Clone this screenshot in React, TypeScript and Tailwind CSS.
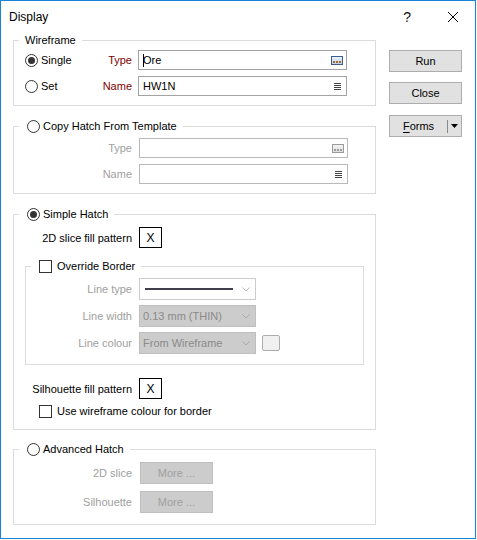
import type { ReactNode } from "react";

function Radio({ checked = false }: { checked?: boolean }) {
  return (
    <span className="w-[13px] h-[13px] rounded-full border border-[#333333] bg-white flex items-center justify-center shrink-0">
      {checked && <span className="w-[7px] h-[7px] rounded-full bg-[#333333]" />}
    </span>
  );
}

function Checkbox() {
  return <span className="w-[13px] h-[13px] border border-[#333333] bg-white shrink-0" />;
}

function Group({ legend, className = "", children }: { legend: ReactNode; className?: string; children: ReactNode }) {
  return (
    <div className={`border border-[#dcdcdc] ${className}`}>
      <div className="-mt-[8px] ml-[5px] w-fit h-[14px] bg-white px-[6px] flex items-center">{legend}</div>
      {children}
    </div>
  );
}

function EllipsisIcon({ disabled = false }: { disabled?: boolean }) {
  return (
    <svg width="12" height="9" viewBox="0 0 12 9">
      <defs>
        <linearGradient id={disabled ? "eg-d" : "eg"} x1="0" y1="0" x2="0" y2="1">
          <stop offset="0" stopColor={disabled ? "#f4f4f4" : "#eef4fc"} />
          <stop offset="1" stopColor={disabled ? "#dedede" : "#b9cce9"} />
        </linearGradient>
      </defs>
      <rect x="0.5" y="0.5" width="11" height="8" fill={`url(#${disabled ? "eg-d" : "eg"})`} stroke={disabled ? "#9c9c9c" : "#3d5c8f"} />
      <rect x="2" y="5" width="2" height="2" fill={disabled ? "#9c9c9c" : "#a86a2e"} />
      <rect x="5" y="5" width="2" height="2" fill={disabled ? "#9c9c9c" : "#a86a2e"} />
      <rect x="8" y="5" width="2" height="2" fill={disabled ? "#9c9c9c" : "#a86a2e"} />
    </svg>
  );
}

function ListIcon() {
  return (
    <svg width="7" height="7" viewBox="0 0 7 7" stroke="#444444" strokeWidth="1">
      <line x1="0" y1="0.5" x2="7" y2="0.5" />
      <line x1="0" y1="2.5" x2="7" y2="2.5" />
      <line x1="0" y1="4.5" x2="7" y2="4.5" />
      <line x1="0" y1="6.5" x2="7" y2="6.5" />
    </svg>
  );
}

function Chevron({ color }: { color: string }) {
  return (
    <svg width="8" height="5" viewBox="0 0 8 5" fill="none" stroke={color} strokeWidth="1">
      <path d="M0.5 0.5 L4 4 L7.5 0.5" />
    </svg>
  );
}

function TextField({ children, icon, disabled = false, className = "" }: { children?: ReactNode; icon: "ellipsis" | "list"; disabled?: boolean; className?: string }) {
  return (
    <div className={`h-[20px] w-[209px] border ${disabled ? "border-[#b9b9b9]" : "border-[#a3a3a3]"} bg-white flex items-center pl-[4px] ${className}`}>
      <div className="flex-1 flex items-center">{children}</div>
      {icon === "ellipsis" ? (
        <span className="mr-[3px] flex"><EllipsisIcon disabled={disabled} /></span>
      ) : (
        <span className="mr-[5px] flex"><ListIcon /></span>
      )}
    </div>
  );
}

function DisabledCombo({ text }: { text: string }) {
  return (
    <div className="ml-[7px] w-[117px] h-[22px] border border-[#bfbfbf] bg-[#cccccc] flex items-center pl-[3px] pr-[5px] text-[#8a8a8a]">
      <span className="flex-1">{text}</span>
      <Chevron color="#a9a9a9" />
    </div>
  );
}

function PatternBox() {
  return (
    <div className="ml-[7px] w-[23px] h-[21px] border border-black bg-white flex items-center justify-center text-[12px]">X</div>
  );
}

function MoreButton() {
  return (
    <div className="ml-[8px] w-[73px] h-[22px] border border-[#bfbfbf] bg-[#cccccc] flex items-center justify-center text-[#a0a0a0]">
      More ...
    </div>
  );
}

export default function App() {
  return (
    <div className="w-[476px] h-[539px] border border-[#1883d7] bg-white flex flex-col font-['Liberation_Sans',Arial,sans-serif] text-[11px] text-black leading-[14px]">
      {/* Title bar */}
      <div className="h-[31px] shrink-0 flex items-center pl-[8px]">
        <span className="text-[12px]">Display</span>
        <span className="ml-auto text-[14px] leading-none text-[#111111]">?</span>
        <svg className="ml-[37px] mr-[17px]" width="10" height="10" viewBox="0 0 10 10" stroke="#000" strokeWidth="1">
          <line x1="0" y1="0" x2="10" y2="10" />
          <line x1="10" y1="0" x2="0" y2="10" />
        </svg>
      </div>

      <div className="flex">
        {/* Left column */}
        <div className="ml-[12px] w-[363px] flex flex-col">
          <Group legend={<span>Wireframe</span>} className="mt-[8px] pb-[9px]">
            <div className="mt-[3px] h-[20px] flex items-center">
              <div className="w-[70px] pl-[11px] flex items-center">
                <Radio checked />
                <span className="ml-[3px]">Single</span>
              </div>
              <div className="w-[48px] text-right text-[#800000]">Type</div>
              <TextField icon="ellipsis" className="ml-[6px]">
                <span className="w-px h-[13px] bg-black -mr-px" />
                <span>Ore</span>
              </TextField>
            </div>
            <div className="mt-[6px] h-[20px] flex items-center">
              <div className="w-[70px] pl-[11px] flex items-center">
                <Radio />
                <span className="ml-[3px]">Set</span>
              </div>
              <div className="w-[48px] text-right text-[#800000]">Name</div>
              <TextField icon="list" className="ml-[6px]">
                <span>HW1N</span>
              </TextField>
            </div>
          </Group>

          <Group
            legend={
              <span className="flex items-center ml-[2px]">
                <Radio />
                <span className="ml-[3px]">Copy Hatch From Template</span>
              </span>
            }
            className="mt-[20px] pb-[9px]"
          >
            <div className="mt-[5px] h-[20px] flex items-center">
              <div className="w-[118px] text-right text-[#a0a0a0]">Type</div>
              <TextField icon="ellipsis" disabled className="ml-[7px]" />
            </div>
            <div className="mt-[6px] h-[20px] flex items-center">
              <div className="w-[118px] text-right text-[#a0a0a0]">Name</div>
              <TextField icon="list" disabled className="ml-[7px]" />
            </div>
          </Group>

          <Group
            legend={
              <span className="flex items-center ml-[2px]">
                <Radio checked />
                <span className="ml-[3px]">Simple Hatch</span>
              </span>
            }
            className="mt-[20px] pb-[11px]"
          >
            <div className="mt-[6px] flex items-center">
              <div className="w-[118px] text-right">2D slice fill pattern</div>
              <PatternBox />
            </div>

            <div className="mt-[18px] mx-[11px] border border-[#dcdcdc] pb-[10px]">
              <div className="-mt-[8px] ml-[5px] w-fit h-[14px] bg-white px-[6px] flex items-center">
                <span className="flex items-center ml-[2px]">
                  <Checkbox />
                  <span className="ml-[5px]">Override Border</span>
                </span>
              </div>
              <div className="mt-[5px] flex items-center">
                <div className="w-[106px] text-right text-[#a0a0a0]">Line type</div>
                <div className="ml-[7px] w-[117px] h-[22px] border border-[#cccccc] bg-white flex items-center pl-[5px] pr-[5px]">
                  <span className="w-[88px] h-[2px] bg-[#3f3f4e]" />
                  <span className="ml-auto flex"><Chevron color="#b8b8b8" /></span>
                </div>
              </div>
              <div className="mt-[5px] flex items-center">
                <div className="w-[106px] text-right text-[#a0a0a0]">Line width</div>
                <DisabledCombo text="0.13 mm (THIN)" />
              </div>
              <div className="mt-[5px] flex items-center">
                <div className="w-[106px] text-right text-[#a0a0a0]">Line colour</div>
                <DisabledCombo text="From Wireframe" />
                <div className="ml-[6px] w-[18px] h-[16px] border border-[#adadad] bg-[#f0f0f0] rounded-[2px]" />
              </div>
            </div>

            <div className="mt-[13px] flex items-center">
              <div className="w-[118px] text-right">Silhouette fill pattern</div>
              <PatternBox />
            </div>
            <div className="mt-[5px] h-[14px] pl-[25px] flex items-center">
              <Checkbox />
              <span className="ml-[5px]">Use wireframe colour for border</span>
            </div>
          </Group>

          <Group
            legend={
              <span className="flex items-center ml-[2px]">
                <Radio />
                <span className="ml-[3px]">Advanced Hatch</span>
              </span>
            }
            className="mt-[19px] pb-[11px]"
          >
            <div className="mt-[6px] flex items-center">
              <div className="w-[118px] text-right text-[#a0a0a0]">2D slice</div>
              <MoreButton />
            </div>
            <div className="mt-[7px] flex items-center">
              <div className="w-[118px] text-right text-[#a0a0a0]">Silhouette</div>
              <MoreButton />
            </div>
          </Group>
        </div>

        {/* Right column */}
        <div className="ml-[13px] flex flex-col">
          <div className="mt-[18px] w-[73px] h-[22px] border border-[#adadad] bg-[#e1e1e1] flex items-center justify-center">Run</div>
          <div className="mt-[10px] w-[73px] h-[22px] border border-[#adadad] bg-[#e1e1e1] flex items-center justify-center">Close</div>
          <div className="mt-[11px] w-[73px] h-[22px] border border-[#adadad] bg-[#e1e1e1] flex items-center">
            <span className="w-[57px] text-center">
              <span className="underline underline-offset-2">F</span>orms
            </span>
            <span className="w-px h-[13px] bg-[#8a8a8a]" />
            <span className="flex-1 flex justify-center">
              <svg width="7" height="4" viewBox="0 0 7 4">
                <path d="M0 0 L7 0 L3.5 4 Z" fill="#000" />
              </svg>
            </span>
          </div>
        </div>
      </div>
    </div>
  );
}
